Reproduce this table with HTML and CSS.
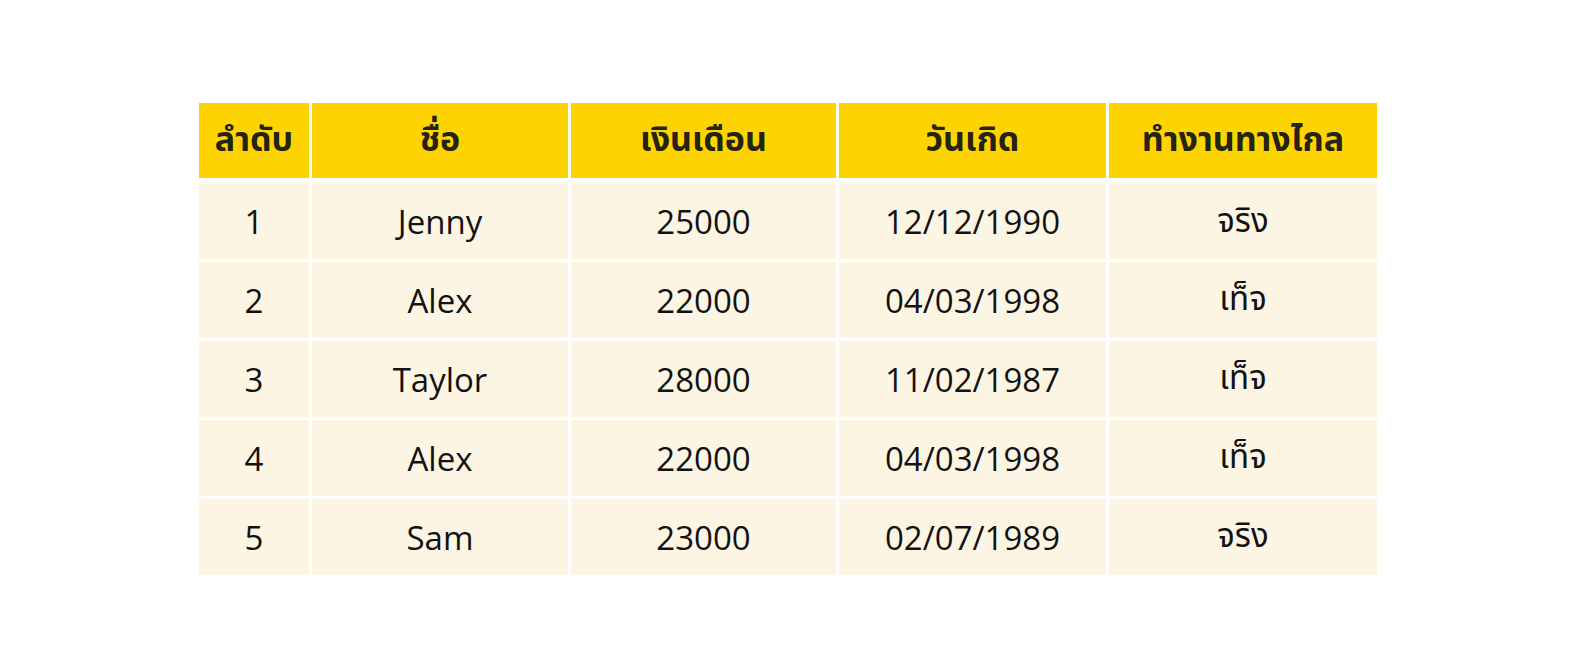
FILE: index.html
```html
<!DOCTYPE html>
<html lang="th">
<head>
<meta charset="utf-8">
<link rel="stylesheet" href="styles.css">
</head>
<body>
<div class="page">
<table class="data">
<colgroup><col class="c1"><col class="c2"><col class="c3"><col class="c4"><col class="c5"></colgroup>
<thead>
<tr><th>ลำดับ</th><th>ชื่อ</th><th>เงินเดือน</th><th>วันเกิด</th><th>ทำงานทางไกล</th></tr>
</thead>
<tbody>
<tr><td>1</td><td>Jenny</td><td>25000</td><td>12/12/1990</td><td class="th">จริง</td></tr>
<tr><td>2</td><td>Alex</td><td>22000</td><td>04/03/1998</td><td class="th">เท็จ</td></tr>
<tr><td>3</td><td>Taylor</td><td>28000</td><td>11/02/1987</td><td class="th">เท็จ</td></tr>
<tr><td>4</td><td>Alex</td><td>22000</td><td>04/03/1998</td><td class="th">เท็จ</td></tr>
<tr><td>5</td><td>Sam</td><td>23000</td><td>02/07/1989</td><td class="th">จริง</td></tr>
</tbody>
</table>
</div>
</body>
</html>
```
FILE: styles.css
```css
html, body {
  margin: 0;
  padding: 0;
  background: #ffffff;
}
.page {
  padding: 100px 0 0 196px;
}
.data {
  table-layout: fixed;
  width: 1184px;
  border-collapse: separate;
  border-spacing: 3px;
  font-family: "Open Sans", "Noto Sans Thai", "Noto Sans", sans-serif;
  color: #121212;
}
.data th {
  background: #fdd402;
  height: 75px;
  padding: 0;
  font-family: "Noto Sans Thai", "Noto Sans", sans-serif;
  font-weight: 700;
  font-size: 34px;
  color: #262214;
  text-align: center;
}
.data td {
  background: #fdf5e4;
  height: 76px;
  padding: 0;
  font-size: 33px;
  font-weight: 400;
  text-align: center;
}
.data tbody tr:first-child td {
  height: 75px;
  border-top: 3px solid #fffaf0;
}
.data td.th {
  font-family: "Noto Sans Thai", "Noto Sans", sans-serif;
  font-size: 33px;
}
.c1 { width: 110px; }
.c2 { width: 256px; }
.c3 { width: 265px; }
.c4 { width: 267px; }
.c5 { width: 268px; }
```
